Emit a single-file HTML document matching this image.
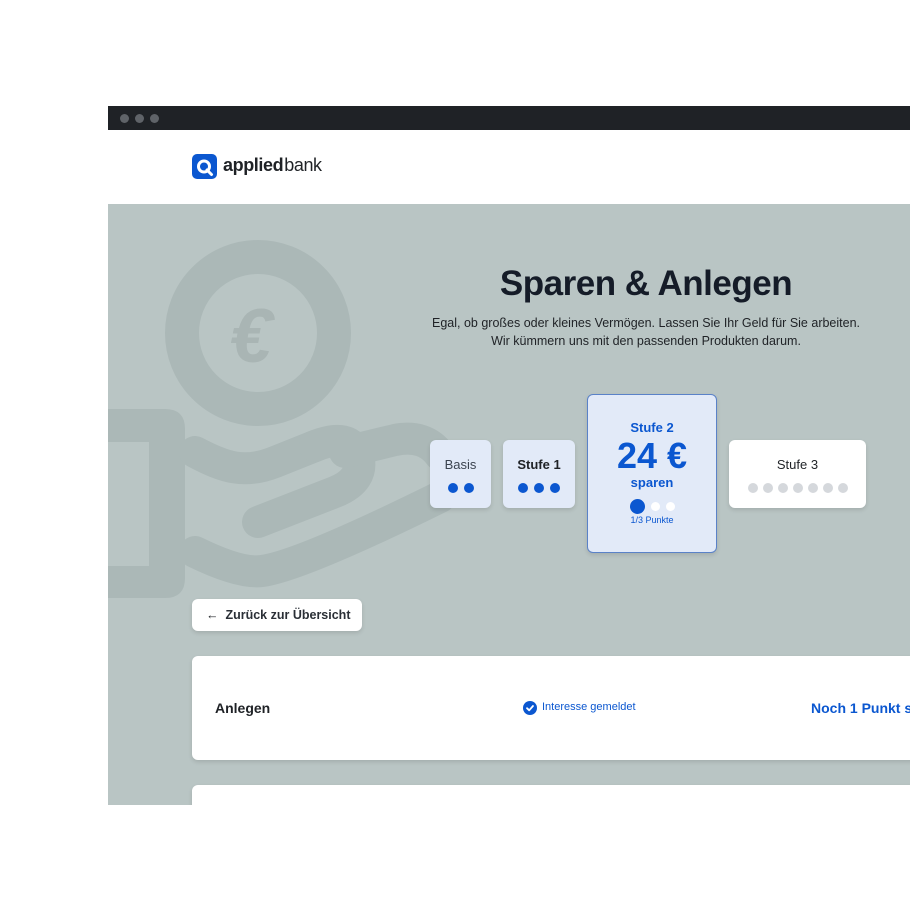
<!DOCTYPE html>
<html><head><meta charset="utf-8"><style>
*{margin:0;padding:0;box-sizing:border-box}
body{width:910px;height:910px;background:#fff;position:relative;overflow:hidden;font-family:"Liberation Sans",Arial,sans-serif}
.abs{position:absolute}
.bar{left:108px;top:106px;width:802px;height:24px;background:#1f2226}
.dot{width:9px;height:9px;border-radius:50%;background:#5f6368;top:8px}
.gray{left:108px;top:204px;width:802px;height:601px;background:#b9c5c4;overflow:hidden}
.card{position:absolute;border-radius:6px;box-shadow:0 2px 4px rgba(0,0,0,.12);text-align:center}
.b{background:#e2eaf8}
.d{display:inline-block;width:10px;height:10px;border-radius:50%;background:#0b57d0;margin:0 3px}
.g{display:inline-block;width:10px;height:10px;border-radius:50%;background:#d5d8dc;margin:0 2.5px}
</style></head><body>
<div class="abs bar"><div class="abs dot" style="left:12px"></div><div class="abs dot" style="left:27px"></div><div class="abs dot" style="left:42px"></div></div>
<svg class="abs" style="left:192px;top:154px" width="25" height="25" viewBox="0 0 25 25"><rect width="25" height="25" rx="5" fill="#0b57d0"/><circle cx="12" cy="12.5" r="5.5" fill="none" stroke="#fff" stroke-width="3"/><path d="M15 16 L19.5 20.5" stroke="#fff" stroke-width="3" stroke-linecap="round"/></svg>
<div class="abs" style="left:223px;top:155px;font-size:18px;color:#1f2226;letter-spacing:-0.4px"><b>applied</b><span style="font-weight:400;margin-left:1px">bank</span></div>
<div class="abs gray">
<svg class="abs" style="left:0;top:0" width="802" height="601" viewBox="108 204 802 601">
<circle cx="258" cy="333" r="76" fill="none" stroke="#abb8b7" stroke-width="34"/>
<text x="251" y="362" font-family="Liberation Sans" font-weight="bold" font-style="italic" font-size="76" fill="#a9b5b4" text-anchor="middle">€</text>
<path d="M108 409 H165 Q185 409 185 429 V578 Q185 598 165 598 H108 Z M108 442 V566 H149 V442 Z" fill="#abb8b7" fill-rule="evenodd"/>
<g fill="none" stroke="#abb8b7" stroke-width="32" stroke-linecap="round" stroke-linejoin="round">
<path d="M195 452 C225 468 245 474 275 462 L315 446"/>
<path d="M258 522 L335 492 Q365 480 358 456 Q350 432 315 446"/>
<path d="M345 452 L395 440 Q425 434 440 455"/>
<path d="M195 552 Q240 574 262 571 Q300 566 440 497"/>
</g>
</svg>
<div class="abs" style="left:288px;top:60px;width:500px;text-align:center;font-size:35px;font-weight:bold;color:#151c28;letter-spacing:-0.5px">Sparen &amp; Anlegen</div>
<div class="abs" style="left:288px;top:110px;width:500px;text-align:center;font-size:12.5px;line-height:18px;color:#1f2226">Egal, ob großes oder kleines Vermögen. Lassen Sie Ihr Geld für Sie arbeiten.<br>Wir kümmern uns mit den passenden Produkten darum.</div>
<div class="card b" style="left:322px;top:236px;width:61px;height:68px"><div style="margin-top:17px;font-size:13px;color:#3c4450">Basis</div><div style="margin-top:8px"><span class="d"></span><span class="d"></span></div></div>
<div class="card b" style="left:395px;top:236px;width:72px;height:68px"><div style="margin-top:17px;font-size:13px;font-weight:bold;color:#1f2226">Stufe 1</div><div style="margin-top:8px"><span class="d"></span><span class="d"></span><span class="d"></span></div></div>
<div class="card" style="left:479px;top:190px;width:130px;height:159px;background:#e2eaf8;border:1.5px solid #5a82c8">
<div style="margin-top:25px;font-size:13px;font-weight:bold;color:#0b57d0">Stufe 2</div>
<div style="font-size:36px;font-weight:bold;color:#0b57d0;line-height:38px;margin-top:2px">24 €</div>
<div style="font-size:13px;font-weight:bold;color:#0b57d0">sparen</div>
<div style="margin-top:8px;height:15px"><span style="display:inline-block;width:15px;height:15px;border-radius:50%;background:#0b57d0;vertical-align:middle"></span><span style="display:inline-block;width:9px;height:9px;border-radius:50%;background:#fff;margin-left:6px;vertical-align:middle"></span><span style="display:inline-block;width:9px;height:9px;border-radius:50%;background:#fff;margin-left:6px;vertical-align:middle"></span></div>
<div style="font-size:9px;color:#0b57d0;margin-top:2px">1/3 Punkte</div>
</div>
<div class="card" style="left:621px;top:236px;width:137px;height:68px;background:#fff"><div style="margin-top:17px;font-size:13px;color:#1f2226">Stufe 3</div><div style="margin-top:8px"><span class="g"></span><span class="g"></span><span class="g"></span><span class="g"></span><span class="g"></span><span class="g"></span><span class="g"></span></div></div>
<div class="card" style="left:84px;top:395px;width:170px;height:32px;background:#fff;text-align:left;font-size:12.5px;color:#1f2226;padding:9px 0 0 14px">←&nbsp; <span style="font-weight:bold;color:#2a2f36">Zurück zur Übersicht</span></div>
<div class="card" style="left:84px;top:452px;width:730px;height:104px;background:#fff;text-align:left">
<div class="abs" style="left:23px;top:44px;font-size:14px;font-weight:bold;color:#1f2226">Anlegen</div>
<svg class="abs" style="left:331px;top:45px" width="14" height="14" viewBox="0 0 14 14"><circle cx="7" cy="7" r="7" fill="#0b57d0"/><path d="M4 7.2 L6.2 9.3 L10 5" stroke="#fff" stroke-width="1.8" fill="none" stroke-linecap="round" stroke-linejoin="round"/></svg>
<div class="abs" style="left:350px;top:45px;font-size:11px;color:#0b57d0">Interesse gemeldet</div>
<div class="abs" style="left:619px;top:44px;font-size:14px;font-weight:bold;color:#0b57d0;white-space:nowrap">Noch 1 Punkt sammeln</div>
</div>
<div class="card" style="left:84px;top:581px;width:730px;height:60px;background:#fff"></div>
</div>
</body></html>
